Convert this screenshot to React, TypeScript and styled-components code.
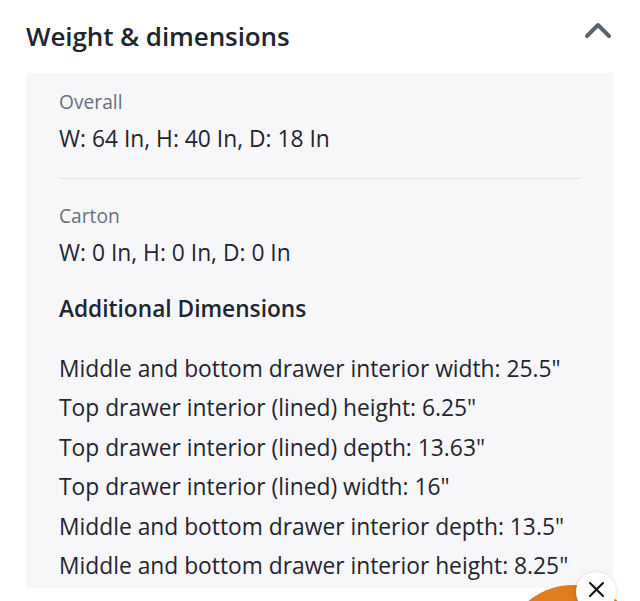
import styled, { createGlobalStyle } from "styled-components";

const GlobalStyle = createGlobalStyle`
  html, body {
    margin: 0;
    padding: 0;
    background: #ffffff;
    font-family: "Open Sans", "Noto Sans", sans-serif;
    color: #1f2530;
  }
`;

const Page = styled.div`
  position: relative;
  width: 640px;
  height: 601px;
  overflow: hidden;
`;

const Header = styled.div`
  display: flex;
  align-items: center;
  justify-content: space-between;
  padding: 12px 28px 0 26px;
  height: 59px;
  box-sizing: border-box;
`;

const Title = styled.h2`
  margin: 0;
  font-size: 26px;
  font-weight: 600;
  color: #1f2530;
  letter-spacing: -0.1px;
`;

const Chevron = styled.svg`
  margin-top: -12px;
`;

const Panel = styled.div`
  margin: 14px 27px 0 26px;
  background: #f7f7f9;
  padding: 15px 32px 3px 33px;
`;

const Label = styled.div`
  font-size: 19.2px;
  color: #6b6f77;
  line-height: 28px;
`;

const Value = styled.div`
  font-size: 22.8px;
  line-height: 32px;
  margin-top: 7px;
`;

const Divider = styled.hr`
  border: none;
  border-top: 1.5px solid #e1e1e4;
  margin: 23px 0 23px;
`;

const SubHeading = styled.h3`
  margin: 24px 0 0;
  font-size: 22.7px;
  font-weight: 600;
  line-height: 32px;
`;

const List = styled.div`
  margin-top: 24px;
  display: flex;
  flex-direction: column;
`;

const ListItem = styled.div`
  font-size: 22.8px;
  line-height: 39.4px;
  white-space: nowrap;
`;

const Orange = styled.div`
  position: absolute;
  left: 503px;
  top: 585px;
  width: 140px;
  height: 140px;
  border-radius: 50%;
  background: #e07b1f;
`;

const CloseButton = styled.button`
  position: absolute;
  left: 576px;
  top: 572px;
  width: 40px;
  height: 40px;
  border-radius: 50%;
  border: none;
  background: #ffffff;
  box-shadow: 0 1px 4px rgba(0, 0, 0, 0.18);
  display: flex;
  align-items: center;
  justify-content: center;
  padding: 0 0 6px;
`;

const details = [
  'Middle and bottom drawer interior width: 25.5"',
  'Top drawer interior (lined) height: 6.25"',
  'Top drawer interior (lined) depth: 13.63"',
  'Top drawer interior (lined) width: 16"',
  'Middle and bottom drawer interior depth: 13.5"',
  'Middle and bottom drawer interior height: 8.25"',
];

export default function App() {
  return (
    <Page>
      <GlobalStyle />
      <Header>
        <Title>Weight &amp; dimensions</Title>
        <Chevron width="28" height="18" viewBox="0 0 28 18">
          <path
            d="M3 15 L14 4 L25 15"
            fill="none"
            stroke="#5c6270"
            strokeWidth="4"
            strokeLinecap="round"
            strokeLinejoin="round"
          />
        </Chevron>
      </Header>
      <Panel>
        <Label>Overall</Label>
        <Value>W: 64 In, H: 40 In, D: 18 In</Value>
        <Divider />
        <Label>Carton</Label>
        <Value>W: 0 In, H: 0 In, D: 0 In</Value>
        <SubHeading>Additional Dimensions</SubHeading>
        <List>
          {details.map((d) => (
            <ListItem key={d}>{d}</ListItem>
          ))}
        </List>
      </Panel>
      <Orange />
      <CloseButton aria-label="Close">
        <svg width="17" height="17" viewBox="0 0 17 17">
          <path
            d="M2 2 L15 15 M15 2 L2 15"
            stroke="#111"
            strokeWidth="2.1"
            strokeLinecap="round"
          />
        </svg>
      </CloseButton>
    </Page>
  );
}
